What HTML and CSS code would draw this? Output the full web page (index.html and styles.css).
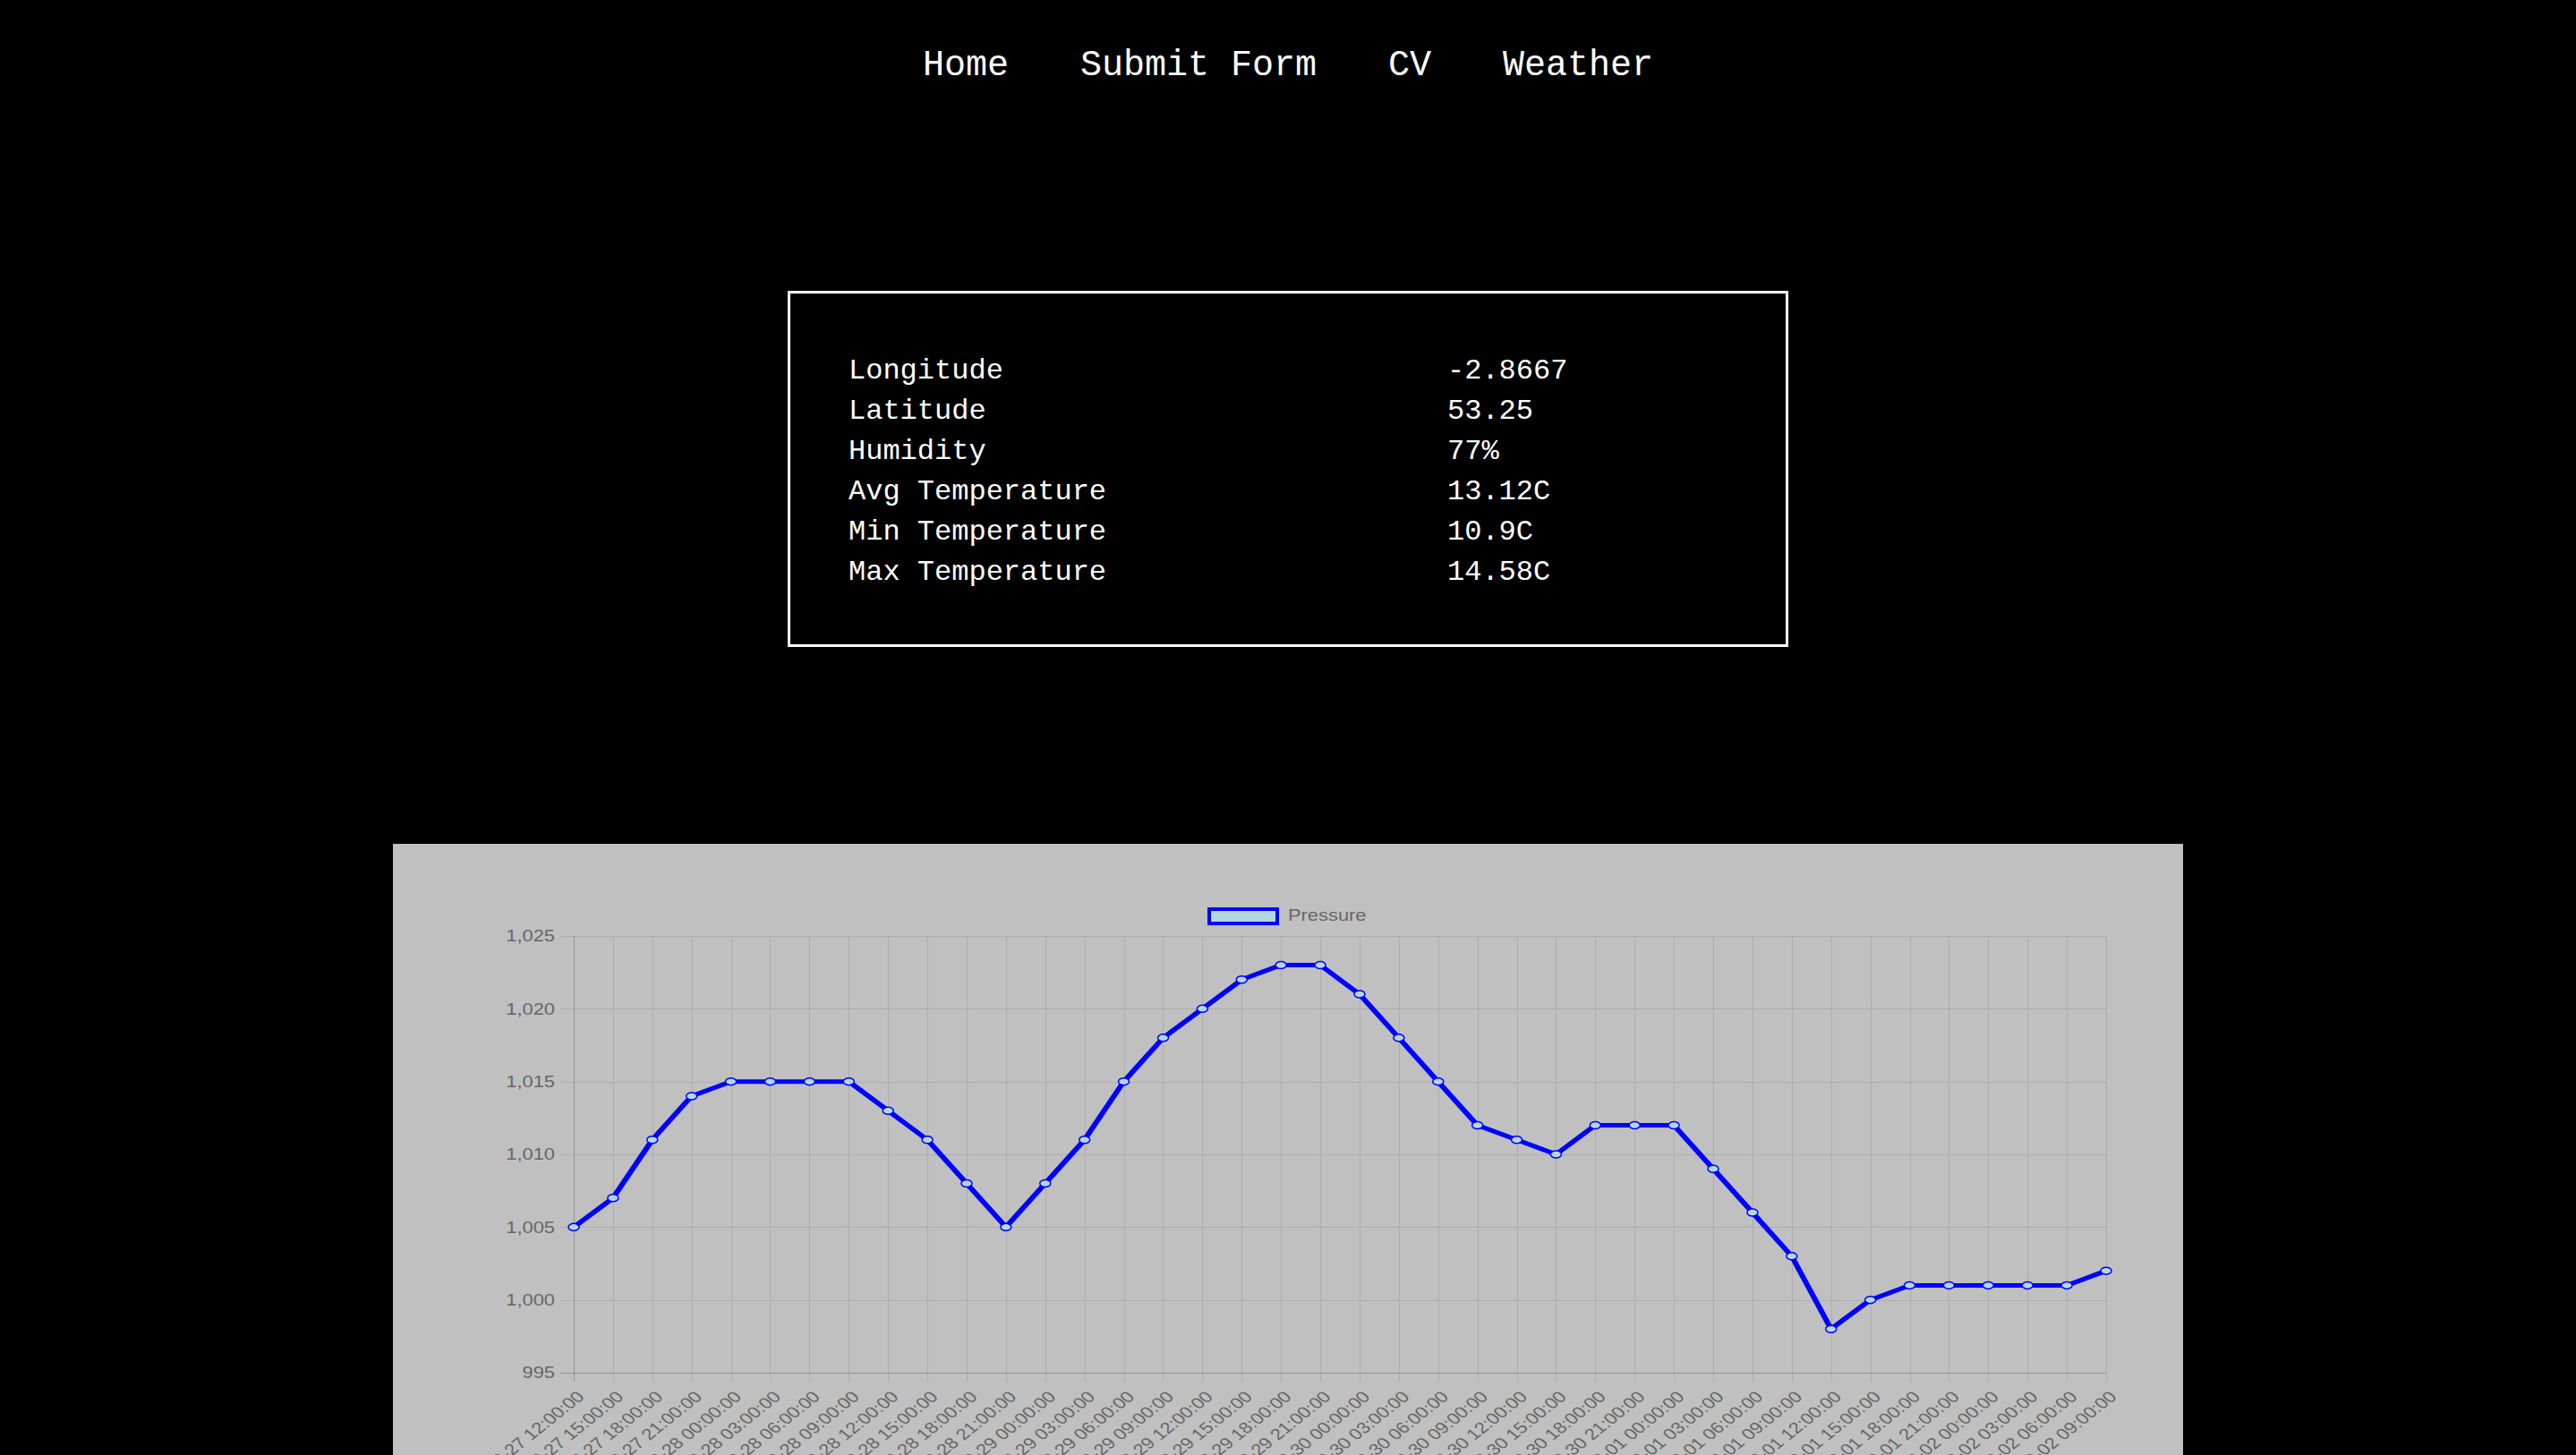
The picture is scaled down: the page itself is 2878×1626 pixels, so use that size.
FILE: index.html
```html
<!DOCTYPE html>
<html lang="en">
<head>
<meta charset="utf-8">
<title>Weather</title>
<link rel="stylesheet" href="styles.css">
</head>
<body>
<nav class="nav">
  <a class="nav-link" href="#">Home</a>
  <a class="nav-link" href="#">Submit Form</a>
  <a class="nav-link" href="#">CV</a>
  <a class="nav-link" href="#">Weather</a>
</nav>
<main class="content">
  <section class="weather-card">
    <dl class="weather-grid">
      <dt>Longitude</dt><dd>-2.8667</dd>
      <dt>Latitude</dt><dd>53.25</dd>
      <dt>Humidity</dt><dd>77%</dd>
      <dt>Avg Temperature</dt><dd>13.12C</dd>
      <dt>Min Temperature</dt><dd>10.9C</dd>
      <dt>Max Temperature</dt><dd>14.58C</dd>
    </dl>
  </section>
  <section class="chart-card">
    <svg class="chart-svg" xmlns="http://www.w3.org/2000/svg" width="2000" height="683" viewBox="0 0 2000 683"></svg>
  </section>
</main>
<script src="script.js"></script>
</body>
</html>
```
FILE: styles.css
```css
* { box-sizing: border-box; }
html, body { margin: 0; padding: 0; background: #000; }
body { overflow: hidden; }

.nav {
  display: flex;
  justify-content: center;
  gap: 80px;
  padding-top: 50px;
  font-family: "Liberation Mono", "DejaVu Sans Mono", monospace;
  font-size: 40px;
  line-height: 48px;
}
.nav-link { color: #fff; text-decoration: none; }

.content {
  display: flex;
  flex-direction: column;
  align-items: center;
}

.weather-card {
  width: 1118px;
  margin-top: 227px;
  border: 3px solid #fff;
  padding: 64px 0 58px 65px;
}
.weather-grid {
  display: grid;
  grid-template-columns: 669px auto;
  margin: 0;
  font-family: "Liberation Mono", "DejaVu Sans Mono", monospace;
  font-size: 32px;
  line-height: 45px;
  color: #fff;
}
.weather-grid dt, .weather-grid dd { margin: 0; }

.chart-card {
  width: 2000px;
  height: 683px;
  margin-top: 220px;
  background: #c0c0c0;
}
.chart-svg { display: block; overflow: hidden; }

.grid-line { stroke: #adadad; stroke-width: 1; }
.axis-line { stroke: #939393; stroke-width: 1; }
.tick-label {
  font-family: "Liberation Sans", Arial, sans-serif;
  font-size: 17.5px;
  fill: #666;
}
.data-line { fill: none; stroke: #0000ff; stroke-width: 5; stroke-linejoin: round; }
.data-point { fill: #b3d8e4; stroke: #0000ff; stroke-width: 1.5; }
.legend-box { fill: #b3d8e4; stroke: #0000ff; stroke-width: 4; }
```
FILE: script.js
```js
(function () {
  var data = [1005, 1007, 1011, 1014, 1015, 1015, 1015, 1015, 1013, 1011,
    1008, 1005, 1008, 1011, 1015, 1018, 1020, 1022, 1023, 1023,
    1021, 1018, 1015, 1012, 1011, 1010, 1012, 1012, 1012, 1009,
    1006, 1003, 998, 1000, 1001, 1001, 1001, 1001, 1001, 1002];
  var NS = 'http://www.w3.org/2000/svg';
  var svg = document.querySelector('.chart-svg');
  var SX = 1.25;
  var L = 202, R = 1914, T = 103, B = 591, MIN = 995, MAX = 1025;
  var n = data.length, step = (R - L) / (n - 1);

  function yOf(v) { return B - (v - MIN) * (B - T) / (MAX - MIN); }
  function xOf(i) { return L + i * step; }
  function crisp(v) { return Math.round(v) + 0.5; }
  function el(tag, attrs, parent) {
    var e = document.createElementNS(NS, tag);
    for (var k in attrs) e.setAttribute(k, attrs[k]);
    (parent || svg).appendChild(e);
    return e;
  }
  function pad(x) { return (x < 10 ? '0' : '') + x; }

  /* legend */
  el('rect', { x: 912, y: 73, width: 76, height: 16, 'class': 'legend-box' });
  var lt = el('text', { 'class': 'tick-label', transform: 'translate(1000,86.3) scale(' + SX + ',1)' });
  lt.textContent = 'Pressure';

  var grid = el('g', {});
  var axes = el('g', {});
  var v, y, x, i, t;

  /* horizontal grid + y labels */
  for (v = MIN; v <= MAX; v += 5) {
    y = crisp(yOf(v));
    el('line', { x1: L - 15, x2: R, y1: y, y2: y, 'class': v === MIN ? 'axis-line' : 'grid-line' }, v === MIN ? axes : grid);
    t = el('text', { 'class': 'tick-label', 'text-anchor': 'end',
      transform: 'translate(181,' + (yOf(v) + 6.3).toFixed(1) + ') scale(' + SX + ',1)' });
    t.textContent = v.toLocaleString('en-US');
  }

  /* vertical grid + x labels */
  var start = Date.UTC(2020, 8, 27, 12);
  for (i = 0; i < n; i++) {
    x = crisp(xOf(i));
    el('line', { x1: x, x2: x, y1: T, y2: B + 10, 'class': i === 0 ? 'axis-line' : 'grid-line' }, i === 0 ? axes : grid);
    var d = new Date(start + i * 3 * 3600000);
    var label = d.getUTCFullYear() + '-' + pad(d.getUTCMonth() + 1) + '-' + pad(d.getUTCDate()) +
      ' ' + pad(d.getUTCHours()) + ':00:00';
    t = el('text', { 'class': 'tick-label', 'text-anchor': 'end',
      transform: 'translate(' + (xOf(i) + 13).toFixed(1) + ',619) scale(' + SX + ',1) rotate(-45)' });
    t.textContent = label;
  }
  svg.appendChild(axes);

  /* data line */
  var lg = el('g', { transform: 'scale(' + SX + ',1)' });
  var pts = [];
  for (i = 0; i < n; i++) pts.push((xOf(i) / SX).toFixed(2) + ',' + yOf(data[i]).toFixed(2));
  el('polyline', { points: pts.join(' '), 'class': 'data-line' }, lg);

  /* points */
  for (i = 0; i < n; i++) {
    el('ellipse', { cx: xOf(i).toFixed(2), cy: yOf(data[i]).toFixed(2), rx: 6, ry: 4, 'class': 'data-point' });
  }
})();
```
